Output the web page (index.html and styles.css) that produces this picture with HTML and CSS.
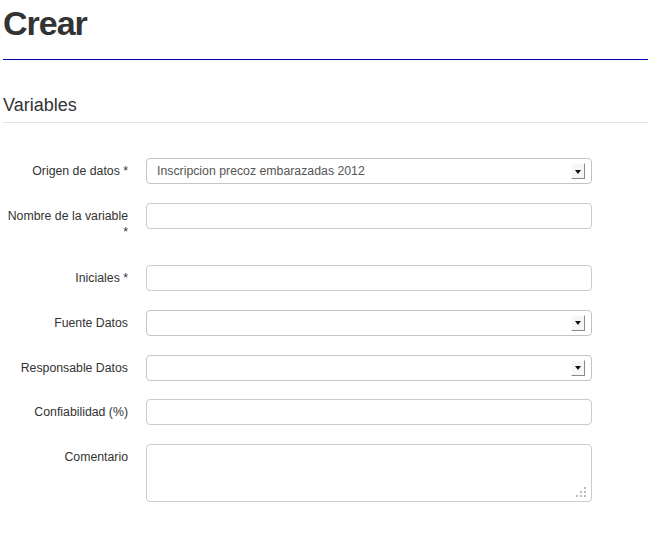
FILE: index.html
```html
<!DOCTYPE html>
<html lang="es">
<head>
<meta charset="utf-8">
<title>Crear</title>
<link rel="stylesheet" href="styles.css">
</head>
<body>
<div class="page">
  <div class="page-header">
    <h1 class="title">Crear</h1>
  </div>
  <form class="form-horizontal">
    <div class="legend">Variables</div>

    <div class="control-group">
      <label class="control-label">Origen de datos *</label>
      <div class="controls">
        <div class="select">
          <span class="select-value">Inscripcion precoz embarazadas 2012</span>
          <span class="select-btn"><span class="arrow"></span></span>
        </div>
      </div>
    </div>

    <div class="control-group control-group-wrap">
      <label class="control-label">Nombre de la variable *</label>
      <div class="controls">
        <input class="input" type="text">
      </div>
    </div>

    <div class="control-group">
      <label class="control-label">Iniciales *</label>
      <div class="controls">
        <input class="input" type="text">
      </div>
    </div>

    <div class="control-group">
      <label class="control-label">Fuente Datos</label>
      <div class="controls">
        <div class="select">
          <span class="select-value"></span>
          <span class="select-btn"><span class="arrow"></span></span>
        </div>
      </div>
    </div>

    <div class="control-group">
      <label class="control-label">Responsable Datos</label>
      <div class="controls">
        <div class="select">
          <span class="select-value"></span>
          <span class="select-btn"><span class="arrow"></span></span>
        </div>
      </div>
    </div>

    <div class="control-group">
      <label class="control-label">Confiabilidad (%)</label>
      <div class="controls">
        <input class="input" type="text">
      </div>
    </div>

    <div class="control-group">
      <label class="control-label">Comentario</label>
      <div class="controls">
        <div class="textarea-wrap">
          <textarea class="textarea"></textarea>
          <svg class="grip" width="12" height="12" viewBox="0 0 12 12">
            <rect x="9" y="1" width="2" height="2" fill="#bdbdbd"/>
            <rect x="5" y="5" width="2" height="2" fill="#bdbdbd"/>
            <rect x="9" y="5" width="2" height="2" fill="#bdbdbd"/>
            <rect x="1" y="9" width="2" height="2" fill="#bdbdbd"/>
            <rect x="5" y="9" width="2" height="2" fill="#bdbdbd"/>
            <rect x="9" y="9" width="2" height="2" fill="#bdbdbd"/>
          </svg>
        </div>
      </div>
    </div>
  </form>
</div>
</body>
</html>
```

FILE: styles.css
```css
html, body {
  margin: 0;
  padding: 0;
  background: #fff;
}

body {
  font-family: "Liberation Sans", Arial, Helvetica, sans-serif;
  font-size: 12.3px;
  color: #333;
}

.page {
  padding-left: 3px;
}

.page-header {
  border-bottom: 1px solid #0000b0;
  padding-top: 3px;
}

.title {
  margin: 0 0 16px;
  font-size: 34px;
  line-height: 40px;
  font-weight: bold;
  letter-spacing: -1px;
  color: #333;
}

.form-horizontal {
  margin: 0;
  padding-top: 33px;
}

.legend {
  font-size: 18px;
  line-height: 24px;
  color: #333;
  padding-bottom: 5px;
  border-bottom: 1px solid #e5e5e5;
  margin-bottom: 35px;
}

.control-group {
  display: grid;
  grid-template-columns: 125px 446px;
  column-gap: 18px;
  align-items: start;
  margin-bottom: 18.67px;
}

.control-group-wrap {
  margin-bottom: 25.67px;
}

.control-label {
  text-align: right;
  padding-top: 5px;
  line-height: 16px;
  color: #333;
}

.controls {
  display: block;
}

.input,
.select {
  box-sizing: border-box;
  display: block;
  width: 446px;
  height: 26px;
  margin: 0;
  border: 1px solid #ccc;
  border-radius: 4px;
  background: #fff;
  font-family: inherit;
  font-size: 12.3px;
  color: #555;
  padding: 0 10px;
}

.select {
  display: flex;
  align-items: center;
  justify-content: space-between;
  border-color: #c4c4c4;
  padding: 0 6px 0 10px;
}

.select-value {
  line-height: 16px;
  color: #555;
}

.select-btn {
  box-sizing: border-box;
  width: 14px;
  height: 16px;
  background: #f6f6f6;
  border-top: 1px solid #fff;
  border-left: 1px solid #fff;
  border-right: 1px solid #8a8a8a;
  border-bottom: 1px solid #8a8a8a;
  display: flex;
  align-items: center;
  justify-content: center;
}

.arrow {
  width: 0;
  height: 0;
  border-left: 3px solid transparent;
  border-right: 3px solid transparent;
  border-top: 4px solid #111;
  margin-top: 1px;
}

.textarea-wrap {
  position: relative;
  width: 446px;
  height: 58px;
}

.textarea {
  box-sizing: border-box;
  display: block;
  width: 446px;
  height: 58px;
  margin: 0;
  border: 1px solid #ccc;
  border-radius: 4px;
  background: #fff;
  resize: none;
  font-family: inherit;
  font-size: 12.3px;
  color: #555;
  padding: 4px 10px;
}

.grip {
  position: absolute;
  right: 5px;
  bottom: 4px;
}
```
